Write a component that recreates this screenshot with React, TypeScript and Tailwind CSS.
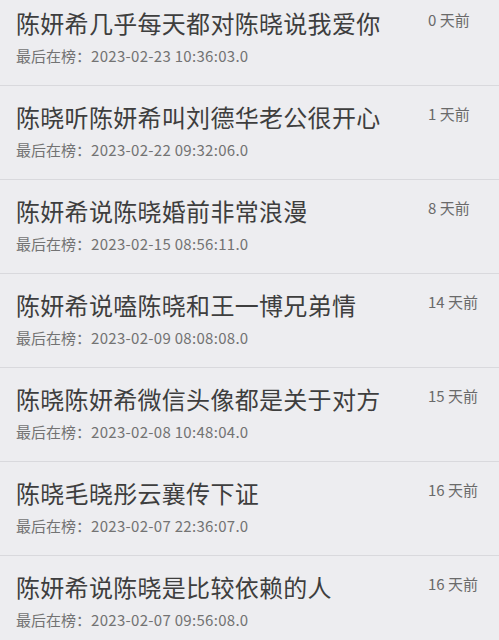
const items = [
  { title: "陈妍希几乎每天都对陈晓说我爱你", time: "2023-02-23 10:36:03.0", ago: "0 天前" },
  { title: "陈晓听陈妍希叫刘德华老公很开心", time: "2023-02-22 09:32:06.0", ago: "1 天前" },
  { title: "陈妍希说陈晓婚前非常浪漫", time: "2023-02-15 08:56:11.0", ago: "8 天前" },
  { title: "陈妍希说嗑陈晓和王一博兄弟情", time: "2023-02-09 08:08:08.0", ago: "14 天前" },
  { title: "陈晓陈妍希微信头像都是关于对方", time: "2023-02-08 10:48:04.0", ago: "15 天前" },
  { title: "陈晓毛晓彤云襄传下证", time: "2023-02-07 22:36:07.0", ago: "16 天前" },
  { title: "陈妍希说陈晓是比较依赖的人", time: "2023-02-07 09:56:08.0", ago: "16 天前" },
];

export default function App() {
  return (
    <div
      className="w-[499px] h-[640px] overflow-hidden bg-[#ededf0]"
      style={{ fontFamily: '"Noto Sans CJK SC", "Noto Sans", sans-serif' }}
    >
      {items.map((it, i) => (
        <div
          key={i}
          className={`flex border-b border-[#d9d9dd] pl-4 pb-[18px] ${i === 0 ? "pt-[7px]" : "pt-[15px]"}`}
        >
          <div className="flex-1 min-w-0">
            <div className="text-[24px] leading-[32px] tracking-[0.3px] text-[#3e3e3e] whitespace-nowrap">
              {it.title}
            </div>
            <div className="mt-[6px] text-[15px] leading-[22px] text-[#737373] whitespace-nowrap">
              最后在榜：<span className="tracking-[0.3px]">{it.time}</span>
            </div>
          </div>
          <div className="w-[71px] shrink-0 pt-[2px] text-[15px] leading-[22px] text-[#6a6a6a] whitespace-nowrap">
            {it.ago}
          </div>
        </div>
      ))}
    </div>
  );
}
